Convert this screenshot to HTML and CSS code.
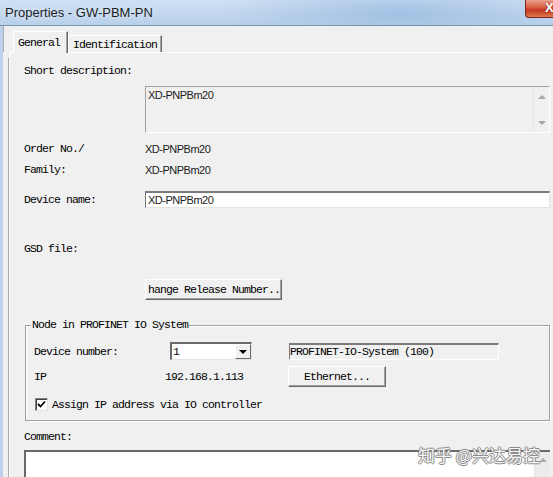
FILE: index.html
```html
<!DOCTYPE html>
<html>
<head lang="en">
    <meta charset="UTF-8">
    <title>Properties - GW-PBM-PN</title>
    <link rel="stylesheet" href="styles.css">
</head>
<body>
<div class="titlebar">
    <span class="title">Properties - GW-PBM-PN</span>
    <span class="close">X</span>
</div>
<div class="frame">
    <div class="tabs">
        <div class="tab tab-active">General</div>
        <div class="tab">Identification</div>
    </div>
    <div class="panel">
        <div class="line">Short description:</div>
        <div class="desc-box">
            <span class="sans">XD-PNPBm20</span>
            <div class="vscroll">
                <span class="arrow-up"></span>
                <span class="arrow-down"></span>
            </div>
        </div>
        <div class="line row-order">
            <span class="label">Order No./</span>
            <span class="sans">XD-PNPBm20</span>
        </div>
        <div class="line row-family">
            <span class="label">Family:</span>
            <span class="sans">XD-PNPBm20</span>
        </div>
        <div class="row-device">
            <span class="label">Device name:</span>
            <div class="edit"><span class="sans">XD-PNPBm20</span></div>
        </div>
        <div class="line row-gsd">GSD file:</div>
        <div class="btn btn-release">hange Release Number..</div>

        <fieldset class="group">
            <legend>Node in PROFINET IO System</legend>
            <div class="row-number">
                <span class="g-label">Device number:</span>
                <div class="combo">
                    <span class="combo-text">1</span>
                    <span class="combo-btn"><span class="arrow-black"></span></span>
                </div>
                <div class="ro-field">PROFINET-IO-System (100)</div>
            </div>
            <div class="row-ip">
                <span class="ip-label">IP</span>
                <span class="ip-value">192.168.1.113</span>
                <div class="btn btn-eth">Ethernet...</div>
            </div>
            <div class="row-check">
                <span class="checkbox">
                    <svg width="9" height="9" viewBox="0 0 9 9"><path d="M1 4 L3.5 6.5 L8 1.5" fill="none" stroke="#000" stroke-width="1.8"/></svg>
                </span>
                <span>Assign IP address via IO controller</span>
            </div>
        </fieldset>

        <div class="line row-comment">Comment:</div>
        <div class="comment-box">
            <div class="vscroll vscroll-comment"><span class="arrow-up"></span></div>
        </div>
    </div>
</div>
<div class="watermark">知乎 @兴达易控</div>
</body>
</html>
```

FILE: styles.css
```css
html, body {
    margin: 0;
    padding: 0;
    overflow: hidden;
}
body {
    width: 553px;
    height: 477px;
    background: #f0f0f0;
    font-family: "Liberation Mono", monospace;
    font-size: 11.5px;
    letter-spacing: -0.9px;
    color: #000;
}
.sans {
    font-family: "Liberation Sans", Arial, sans-serif;
    font-size: 11px;
    letter-spacing: -0.5px;
    color: #1a1a1a;
}

/* title bar */
.titlebar {
    height: 25px;
    display: flex;
    align-items: flex-start;
    border-bottom: 1px solid #7d94ad;
    background: radial-gradient(ellipse 180px 30px at 400px 14px, #a3c1e4, rgba(163,193,228,0) 100%),
                linear-gradient(#cfe0f3, #b8d0ea);
}
.title {
    font-family: "Liberation Sans", Arial, sans-serif;
    font-size: 13px;
    letter-spacing: 0;
    color: #1e1e1e;
    line-height: 25px;
    padding-left: 5px;
    text-shadow: 0 0 6px #e8f1fb;
}
.close {
    margin-left: auto;
    width: 28px;
    height: 18px;
    box-sizing: border-box;
    border: 1px solid #7a2a1e;
    border-top: 0;
    border-right: 0;
    border-radius: 0 0 0 4px;
    background: linear-gradient(#eba08e, #d65a3f 45%, #c2381f 60%, #df7a4d);
    color: #fff;
    font-family: "Liberation Sans", Arial, sans-serif;
    font-weight: bold;
    font-size: 13px;
    line-height: 16px;
    padding-left: 19px;
    overflow: hidden;
    text-shadow: 0 0 2px #7a2a1e;
}

/* window frame */
.frame {
    height: 451px;
    border-left: 3px solid #bcd2ea;
    box-sizing: border-box;
    display: flex;
    flex-direction: column;
    overflow: hidden;
}
.tabs {
    flex: none;
    height: 26px;
    display: flex;
    align-items: flex-end;
    padding-left: 9px;
    border-left: 1px solid #a3aab3;
}
.tab {
    height: 17px;
    line-height: 17px;
    padding: 0 4px 0 4px;
    border-top: 1px solid #fff;
    border-left: 1px solid #fff;
    border-right: 1px solid #696969;
    box-shadow: inset -1px 0 0 #a0a0a0;
    box-sizing: border-box;
}
.tab-active {
    height: 22px;
    line-height: 21px;
    margin-bottom: -1px;
    padding: 0 7px 0 4px;
    background: #f0f0f0;
    position: relative;
    z-index: 1;
}
.panel {
    flex: none;
    margin-left: 6px;
    padding-left: 14px;
    border-top: 1px solid #fff;
    border-left: 1px solid #fff;
    box-shadow: -7px 0 0 -6px #a3aab3;
}

.line {
    height: 16px;
    line-height: 16px;
    margin-top: 10px;
    display: flex;
}
.label {
    width: 121px;
    flex: none;
}

.desc-box {
    margin: 7px 0 0 121px;
    width: 405px;
    height: 47px;
    box-sizing: border-box;
    border-top: 1px solid #a0a0a0;
    border-left: 1px solid #a0a0a0;
    border-right: 1px solid #fff;
    border-bottom: 1px solid #fff;
    display: flex;
    justify-content: space-between;
}
.desc-box .sans {
    padding: 1px 2px;
    line-height: 14px;
}
.vscroll {
    width: 15px;
    border-left: 1px solid #e4e4e4;
    display: flex;
    flex-direction: column;
    justify-content: space-between;
    align-items: center;
    padding: 8px 0 7px;
}
.arrow-up, .arrow-down {
    width: 0;
    height: 0;
    border-left: 4px solid transparent;
    border-right: 4px solid transparent;
}
.arrow-up {
    border-bottom: 4px solid #a8a8a8;
}
.arrow-down {
    border-top: 4px solid #a8a8a8;
}

.row-order { margin-top: 8px; }
.row-family { margin-top: 5px; }
.row-device {
    margin-top: 13px;
    height: 17px;
    display: flex;
    align-items: center;
}
.edit {
    width: 405px;
    height: 17px;
    box-sizing: border-box;
    background: #fff;
    border-top: 2px solid #7a7a7a;
    border-left: 1px solid #7a7a7a;
    border-right: 1px solid #e3e3e3;
    border-bottom: 1px solid #e3e3e3;
    padding-left: 2px;
    line-height: 14px;
}
.row-gsd { margin-top: 33px; }

.btn {
    height: 21px;
    box-sizing: border-box;
    border-top: 1px solid #fff;
    border-left: 1px solid #fff;
    border-right: 1px solid #696969;
    border-bottom: 1px solid #696969;
    box-shadow: inset -1px -1px 0 #a0a0a0;
    line-height: 19px;
    white-space: nowrap;
    overflow: hidden;
}
.btn-release {
    margin: 22px 0 0 121px;
    width: 137px;
    padding-left: 2px;
}

/* group box */
.group {
    margin: 17px 0 0 1px;
    width: 525px;
    box-sizing: border-box;
    padding: 9px 0 9px 8px;
    border: 1px solid #a0a0a0;
    box-shadow: 1px 1px 0 #fff, inset 1px 1px 0 #fff;
}
.group legend {
    margin-left: -3px;
    padding: 0 1px;
    line-height: 16px;
    background: #f0f0f0;
}
.row-number {
    height: 18px;
    display: flex;
    align-items: center;
}
.g-label {
    width: 136px;
    flex: none;
}
.combo {
    width: 82px;
    height: 18px;
    box-sizing: border-box;
    background: #fff;
    border-top: 2px solid #6a6a6a;
    border-left: 2px solid #6a6a6a;
    border-right: 1px solid #e3e3e3;
    border-bottom: 1px solid #e3e3e3;
    display: flex;
    justify-content: space-between;
}
.combo-text {
    line-height: 15px;
    padding-left: 1px;
}
.combo-btn {
    width: 16px;
    height: 15px;
    box-sizing: border-box;
    background: #f0f0f0;
    border-top: 1px solid #fff;
    border-left: 1px solid #fff;
    border-right: 1px solid #696969;
    border-bottom: 1px solid #696969;
    display: flex;
    align-items: center;
    justify-content: center;
}
.arrow-black {
    width: 0;
    height: 0;
    border-left: 4px solid transparent;
    border-right: 4px solid transparent;
    border-top: 4px solid #000;
}
.ro-field {
    margin-left: 37px;
    width: 210px;
    height: 17px;
    box-sizing: border-box;
    border-top: 2px solid #7a7a7a;
    border-left: 1px solid #7a7a7a;
    border-right: 1px solid #fff;
    border-bottom: 1px solid #fff;
    line-height: 14px;
}
.row-ip {
    margin-top: 6px;
    height: 21px;
    display: flex;
    align-items: center;
}
.ip-label {
    width: 131px;
    flex: none;
}
.ip-value {
    width: 123px;
    flex: none;
}
.btn-eth {
    width: 98px;
    text-align: center;
}
.row-check {
    margin: 11px 0 0 1px;
    height: 13px;
    display: flex;
    align-items: center;
    gap: 4px;
}
.checkbox {
    width: 13px;
    height: 13px;
    box-sizing: border-box;
    background: #fff;
    border-top: 1px solid #808080;
    border-left: 1px solid #808080;
    border-right: 1px solid #e3e3e3;
    border-bottom: 1px solid #e3e3e3;
    box-shadow: inset 1px 1px 0 #404040;
    display: flex;
    align-items: center;
    justify-content: center;
}

.row-comment { margin-top: 8px; }
.comment-box {
    margin-top: 5px;
    width: 526px;
    height: 40px;
    box-sizing: border-box;
    background: #fff;
    border-top: 2px solid #6a6a6a;
    border-left: 2px solid #6a6a6a;
    display: flex;
    justify-content: flex-end;
}
.vscroll-comment {
    background: #ececec;
    justify-content: flex-start;
    padding-top: 6px;
}

.watermark {
    position: absolute;
    left: 418px;
    top: 445px;
    font-family: "Noto Sans CJK SC", sans-serif;
    font-size: 17px;
    letter-spacing: 0;
    line-height: 20px;
    color: #f6f6f6;
    text-shadow: 1px 0 0 #8a8a8a, -1px 0 0 #8a8a8a, 0 1px 0 #8a8a8a, 0 -1px 0 #8a8a8a;
}
```
